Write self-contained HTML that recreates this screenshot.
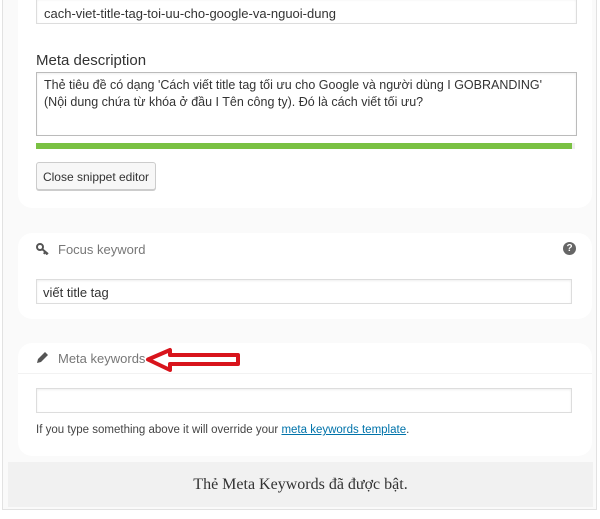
<!DOCTYPE html>
<html><head><meta charset="utf-8"><style>
body{margin:0;width:600px;height:519px;background:#fff;font-family:"Liberation Sans","Noto Sans CJK SC",sans-serif;position:relative;overflow:hidden}
.outer{position:absolute;left:2px;top:-2px;width:593px;height:510px;border:1px solid #e2e2e2;background:#fafafa}
.card{position:absolute;background:#fff;border-radius:14px}
.inp{position:absolute;border:1px solid #ddd;background:#fff;box-shadow:inset 0 1px 2px rgba(0,0,0,.07);font-size:13px;color:#333;box-sizing:border-box}
.hd{position:absolute;font-size:13px;color:#777}
</style></head><body>
<div class="outer"></div>
<div class="card" style="left:18px;top:-20px;width:574px;height:228px"></div>
<div class="inp" style="left:36px;top:-2px;width:541px;height:26px;padding:7px 7px 0">cach-viet-title-tag-toi-uu-cho-google-va-nguoi-dung</div>
<div style="position:absolute;left:36px;top:52px;font-size:15px;color:#333">Meta description</div>
<div class="inp" style="left:36px;top:72px;width:541px;height:64px;padding:4px 7px;line-height:17px;font-size:12.5px;border-color:#bbb;white-space:nowrap">Thẻ tiêu đề có dạng 'Cách viết title tag tối ưu cho Google và người dùng I GOBRANDING'<br>(Nội dung chứa từ khóa ở đầu I Tên công ty). Đó là cách viết tối ưu?</div>
<div style="position:absolute;left:36px;top:143px;width:536px;height:6px;background:#7ac143;border-right:3px solid #eee"></div>
<div style="position:absolute;left:36px;top:162px;width:120px;height:28px;border:1px solid #ccc;border-radius:3px;background:#f7f7f7;box-shadow:0 1px 0 #ccc;font-size:12px;color:#333;line-height:28px;text-align:center;box-sizing:border-box">Close snippet editor</div>
<div class="card" style="left:18px;top:233px;width:574px;height:86px"></div>
<svg style="position:absolute;left:36px;top:243px" width="14" height="12" viewBox="0 0 14 12"><circle cx="4" cy="4" r="3" fill="none" stroke="#555" stroke-width="2"/><path d="M6 6l6 5M9 9l-1 2M11 10.5l-1 1" stroke="#555" stroke-width="2"/></svg>
<div class="hd" style="left:58px;top:242px">Focus keyword</div>
<div style="position:absolute;left:563px;top:242px;width:13px;height:13px;border-radius:50%;background:#666;color:#fff;font-size:10px;font-weight:bold;text-align:center;line-height:13px">?</div>
<div class="inp" style="left:36px;top:279px;width:536px;height:25px;padding:5px 6px">viết title tag</div>
<div class="card" style="left:18px;top:343px;width:574px;height:113px"></div>
<div style="position:absolute;left:18px;top:373px;width:574px;height:1px;background:#f2f2f2"></div>
<svg style="position:absolute;left:36px;top:351px" width="13" height="13" viewBox="0 0 13 13"><path d="M1 12l1-4 7-7 3 3-7 7z" fill="#555"/></svg>
<div class="hd" style="left:58px;top:351px">Meta keywords</div>
<svg style="position:absolute;left:144px;top:347px" width="98" height="26" viewBox="0 0 98 26"><path d="M4 12.5L26 3v5h68v9H26v6z" fill="none" stroke="#d8141c" stroke-width="4" stroke-linejoin="round"/></svg>
<div class="inp" style="left:36px;top:388px;width:536px;height:25px"></div>
<div style="position:absolute;left:36px;top:424px;font-size:11.5px;color:#444">If you type something above it will override your <span style="color:#0073aa;text-decoration:underline">meta keywords template</span>.</div>
<div style="position:absolute;left:8px;top:462px;width:585px;height:45px;background:#f1f1f1;font-family:'Liberation Serif',serif;font-size:16px;color:#333;text-align:center;line-height:45px">Thẻ Meta Keywords đã được bật.</div>
</body></html>
